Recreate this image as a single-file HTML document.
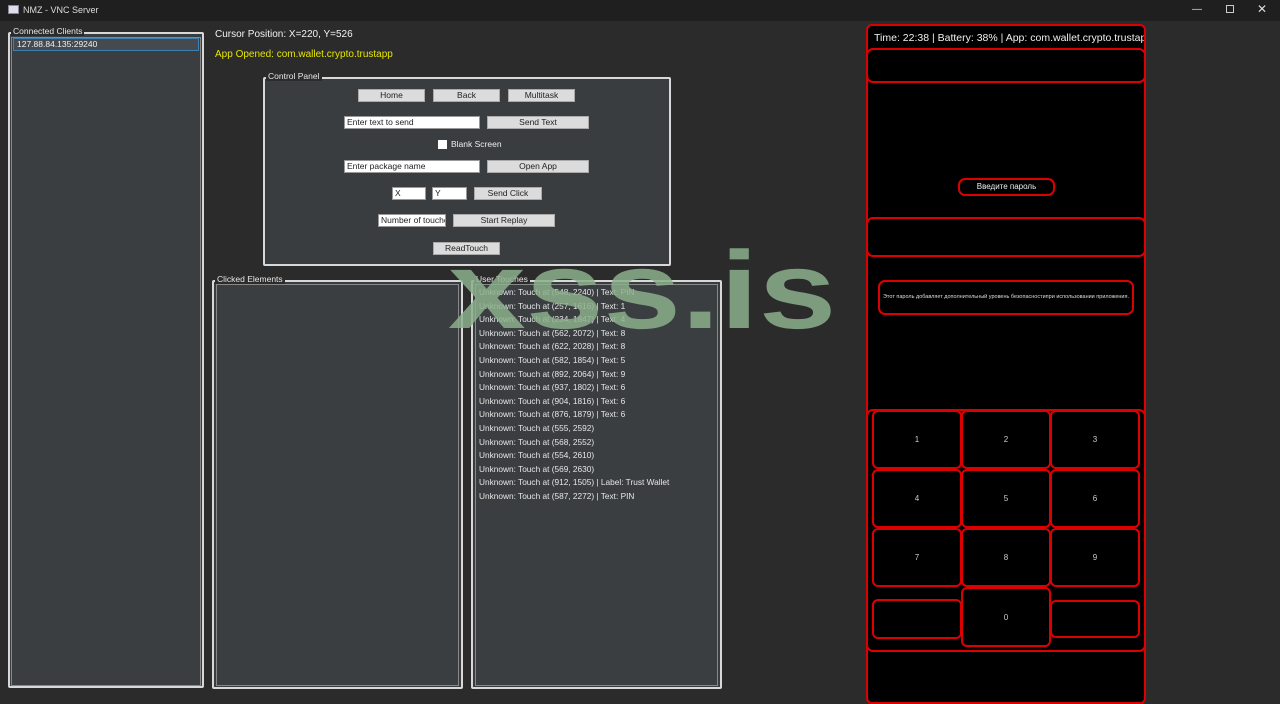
<!DOCTYPE html>
<html><head><meta charset="utf-8"><style>
*{margin:0;padding:0;box-sizing:border-box}
body{width:1280px;height:693px;background:#2b2b2b;position:relative;overflow:hidden;font-family:"Liberation Sans","DejaVu Sans",sans-serif;color:#fff}
.a{position:absolute}
.title{left:0;top:0;width:1280px;height:21px;background:#1f1f1f;font-size:9px;color:#ddd}
.grp{border:2px solid #d8d8d8;border-radius:2px;background:#3a3d40}
.lbl{font-size:8.5px;color:#e8e8e8;background:#2b2b2b;padding:0 2px;line-height:9px}
.inner{border:1px solid #888;background:#3b3e41}
.btn{background:#dcdcdc;border:1px solid #aaa;color:#222;font-size:8.5px;text-align:center;line-height:11px}
.inp{background:#fff;border:1px solid #999;color:#222;font-size:8.5px;line-height:11px;padding-left:2px;white-space:nowrap;overflow:hidden}
.ph{background:#000;border:2px solid #d00}
.r{border:2px solid #d00;border-radius:7px}
.k{border:2px solid #d00;border-radius:6px;font-size:8px;color:#ccc;display:flex;align-items:center;justify-content:center;background:#000}
.t{font-size:8.3px;color:#e6e6e6;line-height:13.6px;white-space:nowrap}
</style></head><body>
<div class="a title"><span class="a" style="left:8px;top:5px;width:11px;height:9px;background:#dde;border:1px solid #889"></span><span class="a" style="left:23px;top:5px">NMZ - VNC Server</span>
<span class="a" style="left:1192px;top:4px;font-size:10px">—</span><span class="a" style="left:1226px;top:5px;width:8px;height:8px;border:1px solid #ccc"></span><span class="a" style="left:1257px;top:2px;font-size:12px">✕</span></div>

<div class="a grp" style="left:8px;top:32px;width:196px;height:656px"></div>
<div class="a inner" style="left:11px;top:37px;width:190px;height:649px"></div>
<div class="a" style="left:13px;top:38px;width:186px;height:13px;border:1px solid #3d7fb0;background:#454a50;font-size:8.5px;line-height:11px;padding-left:3px;color:#eee">127.88.84.135:29240</div>
<div class="a lbl" style="left:11px;top:27px">Connected Clients</div>

<div class="a" style="left:215px;top:29px;font-size:10px;color:#f2f2f2">Cursor Position: X=220, Y=526</div>
<div class="a" style="left:215px;top:49px;font-size:10px;color:#e6e600">App Opened: com.wallet.crypto.trustapp</div>

<div class="a grp" style="left:263px;top:77px;width:408px;height:189px"></div>
<div class="a lbl" style="left:266px;top:72px">Control Panel</div>
<div class="a btn" style="left:358px;top:89px;width:67px;height:13px">Home</div>
<div class="a btn" style="left:433px;top:89px;width:67px;height:13px">Back</div>
<div class="a btn" style="left:508px;top:89px;width:67px;height:13px">Multitask</div>
<div class="a inp" style="left:344px;top:116px;width:136px;height:13px">Enter text to send</div>
<div class="a btn" style="left:487px;top:116px;width:102px;height:13px">Send Text</div>
<div class="a" style="left:438px;top:140px;width:9px;height:9px;background:#fff"></div>
<div class="a" style="left:451px;top:139px;font-size:8.5px;color:#eee">Blank Screen</div>
<div class="a inp" style="left:344px;top:160px;width:136px;height:13px">Enter package name</div>
<div class="a btn" style="left:487px;top:160px;width:102px;height:13px">Open App</div>
<div class="a inp" style="left:392px;top:187px;width:34px;height:13px">X</div>
<div class="a inp" style="left:432px;top:187px;width:35px;height:13px">Y</div>
<div class="a btn" style="left:474px;top:187px;width:68px;height:13px">Send Click</div>
<div class="a inp" style="left:378px;top:214px;width:68px;height:13px">Number of touches</div>
<div class="a btn" style="left:453px;top:214px;width:102px;height:13px">Start Replay</div>
<div class="a btn" style="left:433px;top:242px;width:67px;height:13px">ReadTouch</div>

<div class="a grp" style="left:212px;top:280px;width:251px;height:409px"></div>
<div class="a inner" style="left:216px;top:284px;width:243px;height:402px"></div>
<div class="a lbl" style="left:215px;top:275px">Clicked Elements</div>

<div class="a grp" style="left:471px;top:280px;width:251px;height:409px"></div>
<div class="a inner" style="left:475px;top:284px;width:243px;height:402px"></div>
<div class="a lbl" style="left:474px;top:275px">User Touches</div>
<div class="a t" style="left:479px;top:286px">Unknown: Touch at (548, 2240) | Text: PIN<br>Unknown: Touch at (257, 1616) | Text: 1<br>Unknown: Touch at (234, 1847) | Text: 4<br>Unknown: Touch at (562, 2072) | Text: 8<br>Unknown: Touch at (622, 2028) | Text: 8<br>Unknown: Touch at (582, 1854) | Text: 5<br>Unknown: Touch at (892, 2064) | Text: 9<br>Unknown: Touch at (937, 1802) | Text: 6<br>Unknown: Touch at (904, 1816) | Text: 6<br>Unknown: Touch at (876, 1879) | Text: 6<br>Unknown: Touch at (555, 2592)<br>Unknown: Touch at (568, 2552)<br>Unknown: Touch at (554, 2610)<br>Unknown: Touch at (569, 2630)<br>Unknown: Touch at (912, 1505) | Label: Trust Wallet<br>Unknown: Touch at (587, 2272) | Text: PIN</div>

<div class="a ph" style="left:866px;top:24px;width:280px;height:680px;border-radius:6px"></div>
<div class="a" style="left:874px;top:32px;width:270px;overflow:hidden;white-space:nowrap;font-size:10.5px;color:#f0f0f0">Time: 22:38 | Battery: 38% | App: com.wallet.crypto.trustapp</div>
<div class="a r" style="left:866px;top:48px;width:280px;height:35px"></div>
<div class="a r" style="left:958px;top:178px;width:97px;height:18px;font-size:8px;color:#eee;text-align:center;line-height:14px">Введите пароль</div>
<div class="a r" style="left:866px;top:217px;width:280px;height:40px"></div>
<div class="a r" style="left:878px;top:280px;width:256px;height:35px;font-size:5.5px;color:#ddd;text-align:center;line-height:31px;white-space:nowrap">Этот пароль добавляет дополнительный уровень безопасностипри использовании приложения.</div>
<div class="a r" style="left:866px;top:409px;width:280px;height:243px"></div>
<div class="a k" style="left:872px;top:410px;width:90px;height:59px">1</div>
<div class="a k" style="left:961px;top:410px;width:90px;height:59px">2</div>
<div class="a k" style="left:1050px;top:410px;width:90px;height:59px">3</div>
<div class="a k" style="left:872px;top:469px;width:90px;height:59px">4</div>
<div class="a k" style="left:961px;top:469px;width:90px;height:59px">5</div>
<div class="a k" style="left:1050px;top:469px;width:90px;height:59px">6</div>
<div class="a k" style="left:872px;top:528px;width:90px;height:59px">7</div>
<div class="a k" style="left:961px;top:528px;width:90px;height:59px">8</div>
<div class="a k" style="left:1050px;top:528px;width:90px;height:59px">9</div>
<div class="a k" style="left:872px;top:599px;width:90px;height:40px"></div>
<div class="a k" style="left:961px;top:587px;width:90px;height:60px">0</div>
<div class="a k" style="left:1050px;top:600px;width:90px;height:38px"></div>

<div class="a" style="left:448px;top:236px;font-size:110px;font-weight:bold;line-height:110px;color:rgba(140,175,140,0.85);transform:scaleX(1.27);transform-origin:0 0;white-space:nowrap">xss.is</div>
</body></html>
